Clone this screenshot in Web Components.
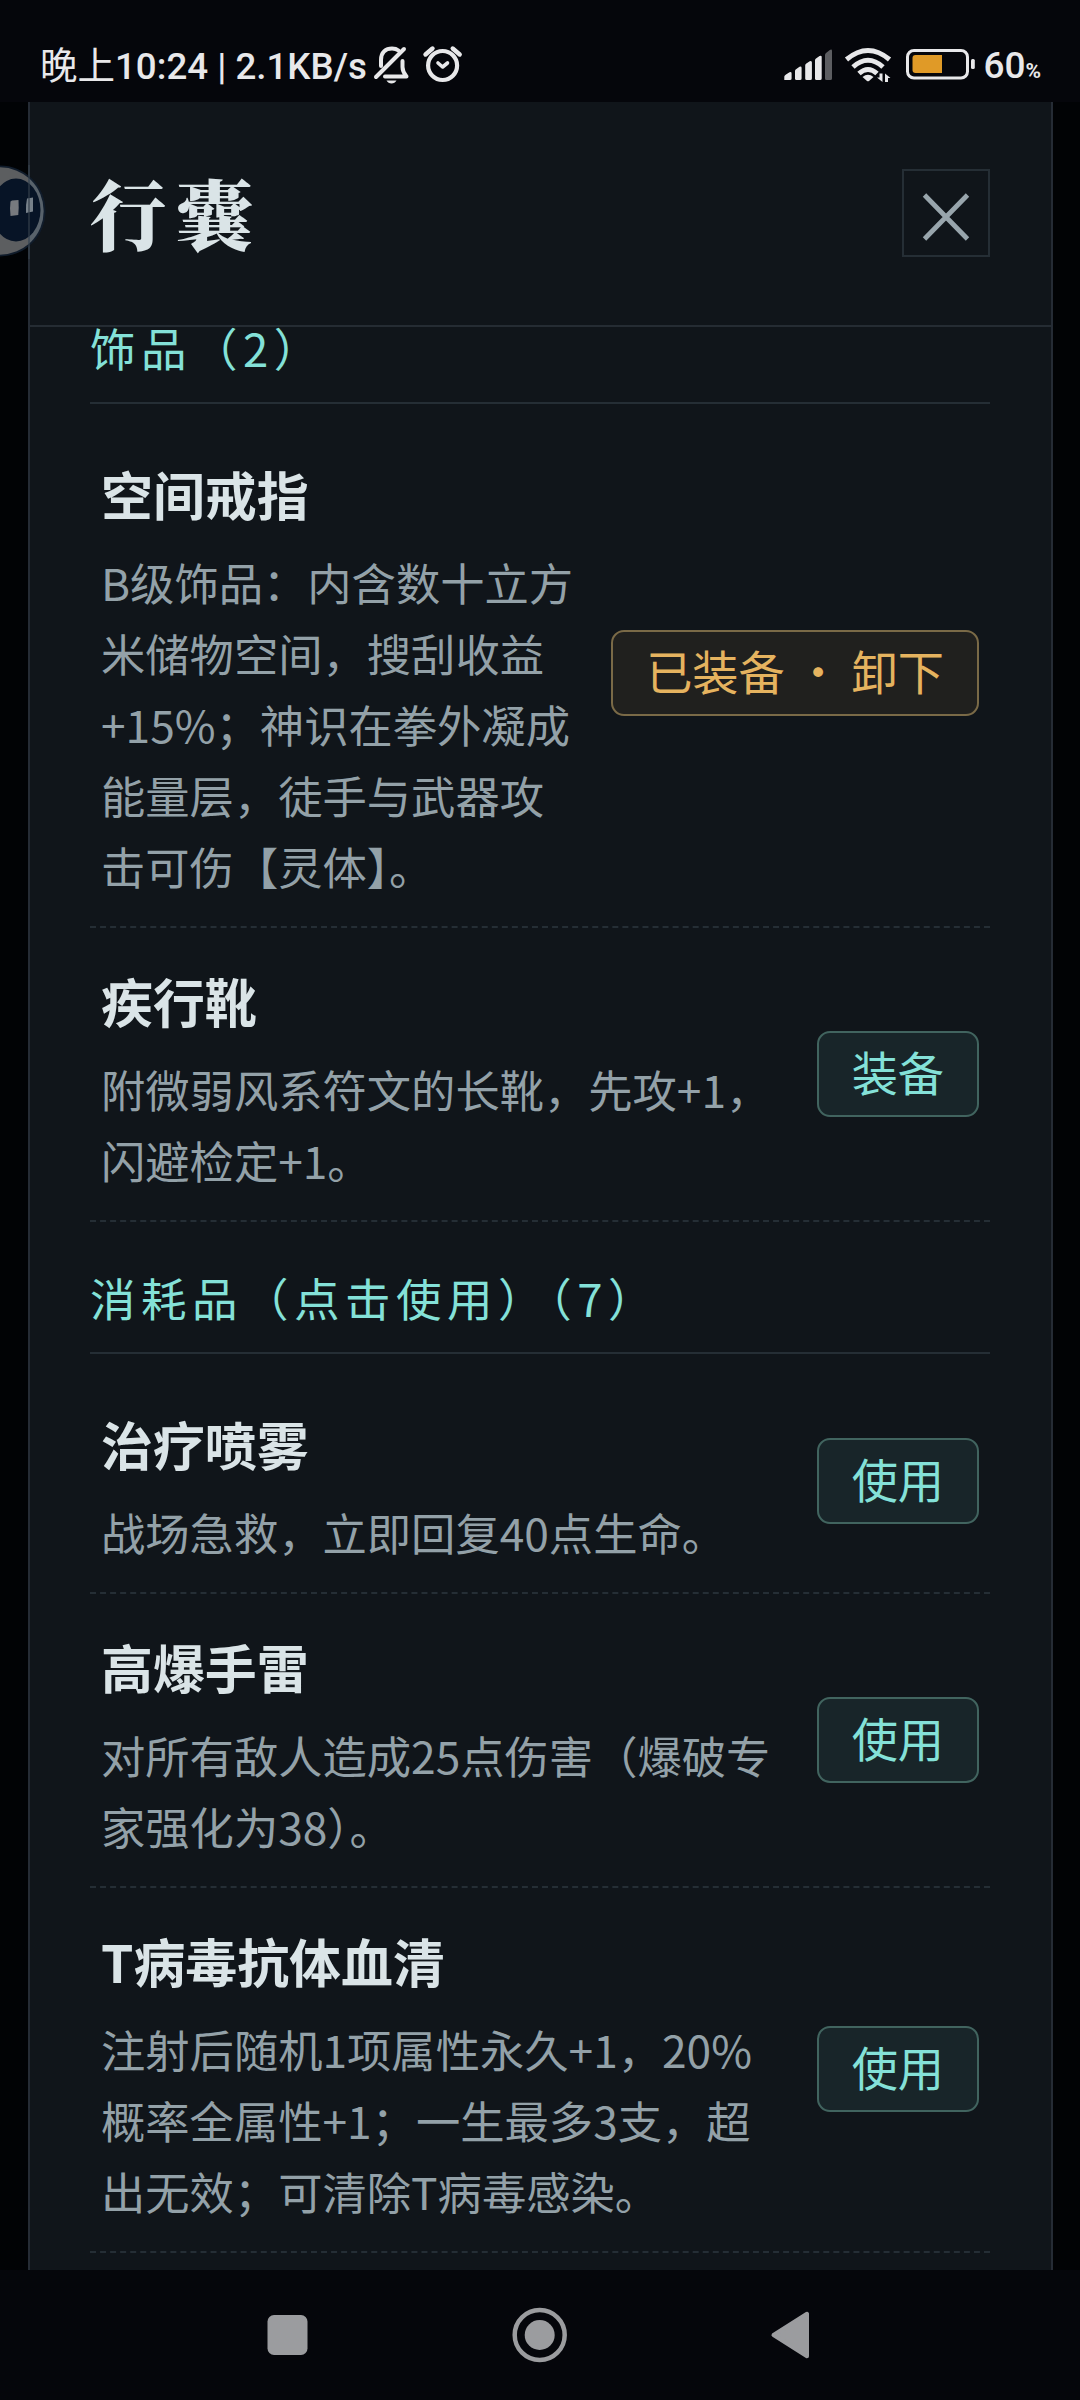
<!DOCTYPE html>
<html lang="zh-CN">
<head>
<meta charset="utf-8">
<title>行囊</title>
<style>
html,body{margin:0;padding:0;background:#010305}
body{width:1080px;height:2400px;overflow:hidden;font-family:"Noto Sans CJK SC",sans-serif}
</style>
</head>
<body>
<bag-screen></bag-screen>
<script>
function define(name, html){
  const t=document.createElement('template');
  t.innerHTML=html;
  customElements.define(name,class extends HTMLElement{
    constructor(){super();this.attachShadow({mode:'open'}).appendChild(t.content.cloneNode(true));}
  });
}

define('status-bar',`
<style>
:host{display:flex;box-sizing:border-box;height:102px;padding:26px 39px 0 40px;background:#05060b;color:#e8e8ea;justify-content:space-between;align-items:flex-start}
.l,.r{display:flex;align-items:center;height:80px}
.t{font:500 36.700px/80px Roboto,"Noto Sans CJK SC",sans-serif;white-space:pre;width:324px;margin-top:-3px}
.cn{font-weight:400;font-size:37.500px;font-family:"Noto Sans CJK SC",sans-serif}
.num{font:500 37px/80px Roboto,sans-serif;display:flex;align-items:baseline;margin-top:4px}
.pc{font-size:21px;font-weight:700;margin-left:0}
svg{display:block}
</style>
<div class="l"><span class="t"><span class="cn">晚上</span>10:24 | 2.1KB/s</span>
<svg style="margin-left:9px" width="92" height="80" viewBox="373 26 92 80" fill="none" stroke="#e8e8ea" stroke-width="4" stroke-linecap="round" stroke-linejoin="round">
<path d="M376 77L404 49" /><path d="M381 66V60C381 52 386 48.500 392 48.500C394.500 48.500 397 49.300 398.500 50.500"/><path d="M385 76.500H406.500C404 73.500 402.500 71 402.500 67V61"/><path d="M386.500 80.500H396.500C395.500 82.500 393.500 83.500 391.500 83.500S387.500 82.500 386.500 80.500Z" fill="#e8e8ea" stroke="none"/>
<circle cx="442.600" cy="65.500" r="14.500" stroke-width="4.200"/><path d="M438 63L442.600 67L447.500 63" stroke-width="3.600"/><path d="M425.500 54.500L432.500 48.500M459.700 54.500L452.700 48.500" stroke-width="4.400"/></svg></div>
<div class="r"><svg width="200" height="80" viewBox="783 26 200 80" fill="#e8e8ea">
<path d="M784.300 80V76.500Q784.500 75.500 786 74.500L789.500 72.200Q791.600 71.500 791.600 73.500V78.500Q791.600 80 790 80ZM795 79V71Q795 70 796 69.200L799.500 66.800Q801.600 66 801.600 68V78.500Q801.600 80 800 80H796.500Q795 80 795 78.500ZM805.200 79V65.500Q805.200 64.500 806 63.800L809.700 61.300Q811.900 60.300 811.900 62.500V78.500Q811.900 80 810.300 80H806.700Q805.200 80 805.200 78.500ZM815 79V60.500Q815 59.300 816 58.600L819.500 56Q821.700 55 821.700 57V78.500Q821.700 80 820 80H816.500Q815 80 815 78.500Z"/>
<path fill="#5c5d61" d="M825 79V55Q825 53.800 826 53L829.800 50Q832 48.800 832 51V78.500Q832 80 830.400 80H826.500Q825 80 825 78.500Z"/>
<g fill="none" stroke="#e8e8ea" stroke-width="5"><path d="M846.500 59.500Q868 41.500 889.500 59.500"/><path d="M853 67Q868 53.500 883 67"/><path d="M859 73.500Q868 65.500 877 73.500"/></g>
<path d="M862.500 77Q868 72.500 873.500 77L869 81Q868 81.700 867 81Z"/>
<path d="M879.500 73.500H882.500V82L877 77.500H879.500ZM885 82V73.500L890.500 78H888V82Z"/>
<rect x="907.500" y="50.500" width="60" height="27.500" rx="6.500" fill="none" stroke="#e8e8ea" stroke-width="3"/>
<path fill="#e09a27" d="M942 55H915.500Q912.500 55 912.500 58V70Q912.500 73 915.500 73H942Z"/><rect x="971" y="59" width="3.800" height="10" rx="1.500"/></svg>
<span class="num">60<span class="pc">%</span></span></div>`);

define('panel-header',`
<style>
:host{display:flex;box-sizing:border-box;height:225px;padding:0 61px 1px 60px;justify-content:space-between;align-items:center;border-bottom:2px solid #252c33}
h1{margin:-2px 0 0;font:900 77px/120px "Noto Serif CJK SC","Noto Serif SC","Source Han Serif SC","Noto Sans CJK SC",serif;letter-spacing:9px;color:#dae4e7}
button{box-sizing:border-box;width:88px;height:88px;border:2px solid #252e35;background:none;padding:0;display:flex}
svg{display:block}
</style>
<h1><slot></slot></h1>
<button aria-label="关闭"><svg width="84" height="84" viewBox="0 0 84 84" stroke="#98a5ac" stroke-width="4.800"><path d="M20.500 24L63.500 68M63.500 24L20.500 68"/></svg></button>`);

define('bag-section',`
<style>
:host{display:block}
h2{box-sizing:border-box;height:77px;margin:0 0 17px;border-bottom:2px solid #252e35;font-weight:400;font-size:45.500px;line-height:40px;letter-spacing:5.500px;color:#84e1d8;white-space:nowrap}
</style>
<h2><slot name="title"></slot></h2><slot></slot>`);

define('bag-item',`
<style>
:host{display:flex;box-sizing:border-box;padding:20px 11px 24px;border-bottom:2px dashed #252e35;gap:32px;align-items:center}
.b{flex:1;min-width:0}
.n{font-weight:700;font-size:51.900px;line-height:93px;padding:6px 0 7px;color:#dae4e7}
.d{font-size:44.300px;line-height:71px;color:#93a1a8}
</style>
<div class="b"><div class="n"><slot name="name"></slot></div><div class="d"><slot></slot></div></div><slot name="action"></slot>`);

define('bag-button',`
<style>
:host{display:block;flex:none;margin-top:3px}
button{display:block;box-sizing:border-box;height:86px;border:2px solid #41645f;border-radius:13px;background:#182529;color:#84e1d8;font:400 46.200px/76px "Noto Sans CJK SC",sans-serif;padding:0 33px 6px;white-space:nowrap}
:host([worn]) button{border-color:#7a6a47;background:#20201e;color:#e5b35f}
</style>
<button><slot></slot></button>`);

define('float-ball',`
<style>:host{display:block;position:absolute;left:0;top:165px;width:46px;height:94px}svg{display:block}</style>
<svg width="46" height="94" viewBox="0 165 46 94">
<defs><clipPath id="o"><rect x="0" y="160" width="28" height="100"/></clipPath><clipPath id="i"><rect x="28" y="160" width="20" height="100"/></clipPath></defs>
<circle cx="0" cy="211" r="45.500" fill="#101c2b"/>
<circle cx="0" cy="211" r="43.700" fill="#5c5e60" clip-path="url(#o)"/><circle cx="0" cy="211" r="43.700" fill="#58626b" clip-path="url(#i)"/>
<ellipse cx="16" cy="210" rx="24.500" ry="31.500" fill="#071426"/>
<path d="M12 200.500L18.500 200Q19 208 18.300 215L10.500 216Q9.500 208 10.500 201.500Z" fill="#777a7e"/>
<path d="M27 198.500L33 197.500V211.500L26 213Q25.500 205 27 198.500Z" fill="#77818a"/>
<path d="M29 165V259" stroke="#34404c" stroke-width="2" opacity=".6"/></svg>`);

define('nav-bar',`
<style>:host{display:flex;height:130px;background:#05060b;justify-content:center}svg{display:block}</style>
<svg width="1080" height="130" viewBox="0 2270 1080 130" fill="#9b9c9f">
<rect x="267.500" y="2315" width="40" height="40" rx="6.500"/>
<circle cx="539.700" cy="2335" r="25" fill="none" stroke="#9b9c9f" stroke-width="4.500"/><circle cx="539.700" cy="2335" r="15"/>
<path d="M773.500 2335L807 2313.800V2356.200Z" stroke="#9b9c9f" stroke-width="4" stroke-linejoin="round"/></svg>`);

define('bag-screen',`
<style>
:host{display:flex;flex-direction:column;width:1080px;height:2400px;position:relative;background:#010305}
.p{flex:1;min-height:0;box-sizing:border-box;width:1025px;margin-left:28px;background:#10151a;border:solid #252c35;border-width:0 2px;display:flex;flex-direction:column}
.s{flex:1;min-height:0;padding:0 61px 0 60px}
.second{margin-top:55px}
</style>
<status-bar></status-bar>
<div class="p"><panel-header>行囊</panel-header>
<div class="s">
<bag-section><span slot="title">饰品（2）</span>
<bag-item><span slot="name">空间戒指</span>B级饰品：内含数十立方米储物空间，搜刮收益+15%；神识在拳外凝成能量层，徒手与武器攻击可伤【灵体】。<bag-button slot="action" worn>已装备 · 卸下</bag-button></bag-item>
<bag-item><span slot="name">疾行靴</span>附微弱风系符文的长靴，先攻+1，闪避检定+1。<bag-button slot="action">装备</bag-button></bag-item>
</bag-section>
<bag-section class="second"><span slot="title">消耗品（点击使用）（7）</span>
<bag-item><span slot="name">治疗喷雾</span>战场急救，立即回复40点生命。<bag-button slot="action">使用</bag-button></bag-item>
<bag-item><span slot="name">高爆手雷</span>对所有敌人造成25点伤害（爆破专家强化为38）。<bag-button slot="action">使用</bag-button></bag-item>
<bag-item><span slot="name">T病毒抗体血清</span>注射后随机1项属性永久+1，20%概率全属性+1；一生最多3支，超出无效；可清除T病毒感染。<bag-button slot="action">使用</bag-button></bag-item>
</bag-section>
</div></div>
<nav-bar></nav-bar>
<float-ball></float-ball>`);
</script>
</body>
</html>
